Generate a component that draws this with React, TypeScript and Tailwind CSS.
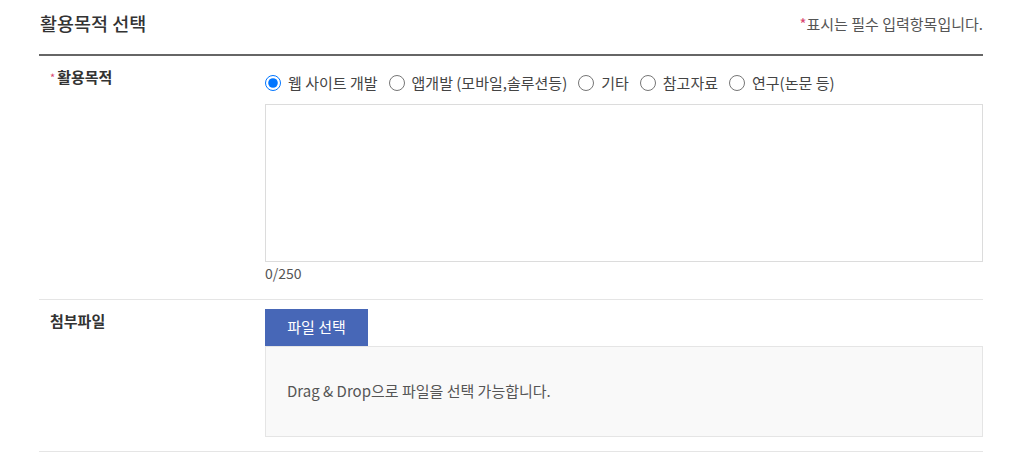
import React, { useState } from 'react';

const PURPOSES = ['웹 사이트 개발', '앱개발 (모바일,솔루션등)', '기타', '참고자료', '연구(논문 등)'];

export default function App() {
  const [purpose, setPurpose] = useState(PURPOSES[0]);
  const [text, setText] = useState('');

  return (
    <div className="min-h-screen bg-white pl-[39px] pr-[41px] text-[#555] font-['Noto_Sans_CJK_KR','Noto_Sans',sans-serif] text-[15px]">
      {/* 헤더 */}
      <div className="flex items-center justify-between h-[56px] pb-[6px] border-b-2 border-[#666]">
        <h2 className="text-[18.5px] font-medium text-[#333] pl-[1px]">활용목적 선택</h2>
        <p className="text-[15px] text-[#555]">
          <span className="text-[#d9456f]">*</span>표시는 필수 입력항목입니다.
        </p>
      </div>

      {/* 활용목적 */}
      <div className="flex border-b border-[#e5e5e5] pt-[11px] pb-[16px]">
        <div className="w-[226px] pl-[11px] leading-[20px] font-bold text-[#333]">
          <span className="text-[#d9456f] text-[11px] font-normal mr-[2px] align-top">*</span>활용목적
        </div>
        <div className="flex-1 pt-[6px]">
          <div className="flex items-center h-[20px] leading-[20px] text-[#444]">
            {PURPOSES.map(p => (
              <label key={p} className="flex items-center mr-[11px] cursor-pointer">
                <input
                  type="radio"
                  name="purpose"
                  checked={purpose === p}
                  onChange={() => setPurpose(p)}
                  className="w-[16px] h-[16px] m-0 mr-[7px]"
                />
                <span>{p}</span>
              </label>
            ))}
          </div>
          <textarea
            value={text}
            maxLength={250}
            onChange={e => setText(e.target.value)}
            className="block w-full h-[158px] mt-[11px] border border-[#dcdcdc] resize-none outline-none p-2"
          />
          <div className="leading-[20px] mt-[1px] text-[14px]">{text.length}/250</div>
        </div>
      </div>

      {/* 첨부파일 */}
      <div className="flex border-b border-[#e5e5e5] pt-[9px] pb-[14px]">
        <div className="w-[226px] pl-[11px] pt-[2px] leading-[20px] font-bold text-[#333]">첨부파일</div>
        <div className="flex-1">
          <button className="w-[103px] h-[37px] bg-[#4767b7] text-white text-[15px]">파일 선택</button>
          <div className="h-[91px] flex items-center pl-[21px] bg-[#f9f9f9] border border-[#e5e5e5] text-[#555]">
            Drag &amp; Drop으로 파일을 선택 가능합니다.
          </div>
        </div>
      </div>
    </div>
  );
}
